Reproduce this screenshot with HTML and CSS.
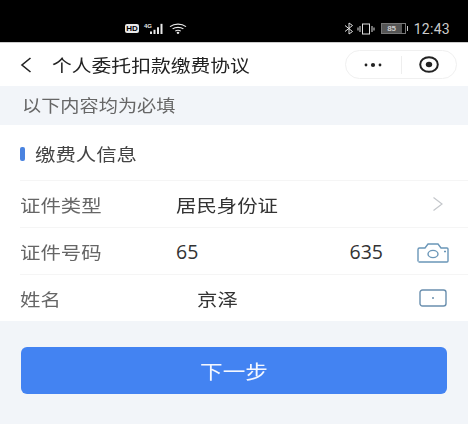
FILE: index.html
```html
<!DOCTYPE html>
<html lang="zh-CN">
<head>
    <meta charset="UTF-8">
    <title>个人委托扣款缴费协议</title>
    <link rel="stylesheet" href="styles.css">
</head>
<body>
    <div class="status-bar">
        <div class="status-left">
            <span class="hd-badge">HD</span>
            <span class="net-label">4G</span>
            <svg class="signal" width="16" height="11" viewBox="0 0 16 13" preserveAspectRatio="none">
                <rect x="0" y="10" width="2" height="3" fill="#e8e8e8"/>
                <rect x="3.5" y="8" width="2" height="5" fill="#e8e8e8"/>
                <rect x="7" y="5" width="2" height="8" fill="#e8e8e8"/>
                <rect x="10.5" y="1" width="2" height="12" fill="#e8e8e8"/>
            </svg>
            <svg class="wifi" width="18" height="11" viewBox="0 0 18 13" preserveAspectRatio="none" fill="none" stroke="#e8e8e8" stroke-width="1.3">
                <path d="M1 4.2C5.5 0.4 12.5 0.4 17 4.2"/>
                <path d="M3.6 7C6.6 4.6 11.4 4.6 14.4 7"/>
                <path d="M6.2 9.6C7.8 8.5 10.2 8.5 11.8 9.6"/>
                <circle cx="9" cy="11.6" r="0.7" fill="#e8e8e8"/>
            </svg>
        </div>
        <div class="status-right">
            <svg class="bt" width="10" height="13" viewBox="0 0 10 13" fill="none" stroke="#e0e0e0" stroke-width="1">
                <path d="M1 3.5L8.5 9.5L5 12V1L8.5 3.5L1 9.5"/>
            </svg>
            <svg class="vibrate" width="18" height="12" viewBox="0 0 18 12" fill="none" stroke="#e0e0e0" stroke-width="1">
                <rect x="5.5" y="1" width="7" height="10"/>
                <path d="M3 3V9M1 4.5V7.5M15 3V9M17 4.5V7.5"/>
            </svg>
            <span class="battery"><span class="battery-level">85</span></span>
            <span class="battery-tip"></span>
            <span class="clock">12:43</span>
        </div>
    </div>

    <div class="nav-bar">
        <svg class="back" width="12" height="16" viewBox="0 0 12 16" fill="none" stroke="#222" stroke-width="1.6">
            <path d="M10.5 1L2 8L10.5 15"/>
        </svg>
        <div class="nav-title wide-text">个人委托扣款缴费协议</div>
        <div class="capsule">
            <div class="capsule-part">
                <svg width="20" height="6" viewBox="0 0 20 6" fill="#222">
                    <circle cx="3" cy="3" r="1.4"/>
                    <circle cx="10" cy="3" r="2.1"/>
                    <circle cx="17" cy="3" r="1.4"/>
                </svg>
            </div>
            <div class="capsule-line"></div>
            <div class="capsule-part">
                <svg width="20" height="17" viewBox="0 0 20 17">
                    <ellipse cx="10" cy="8.5" rx="8.8" ry="7.3" fill="none" stroke="#222" stroke-width="2"/>
                    <ellipse cx="10" cy="8.5" rx="3.2" ry="2.7" fill="#222"/>
                </svg>
            </div>
        </div>
    </div>

    <div class="notice"><span class="wide-text">以下内容均为必填</span></div>

    <div class="form">
        <div class="section-title"><span class="marker"></span><span class="wide-text">缴费人信息</span></div>
        <div class="row">
            <div class="label wide-text">证件类型</div>
            <div class="value wide-text">居民身份证</div>
            <svg class="row-icon arrow" width="12" height="16" viewBox="0 0 12 16" fill="none" stroke="#c4c7cb" stroke-width="1.2">
                <path d="M1.5 1.5L10 8L1.5 14.5"/>
            </svg>
        </div>
        <div class="row">
            <div class="label wide-text">证件号码</div>
            <div class="value id-value"><span>65</span><span>635</span></div>
            <svg class="row-icon camera" width="32" height="20" viewBox="0 0 32 20" fill="none" stroke="#6a96b8" stroke-width="1.4">
                <path d="M1 18.5V6.5C1 5.5 1.5 5 2.5 5H8L11 1H21L24 5H30C30.6 5 31 5.4 31 6V18C31 18.6 30.6 19 30 19H1.5"/>
                <ellipse cx="16" cy="11" rx="5" ry="3.6"/>
                <path d="M27 8.5H29"/>
            </svg>
        </div>
        <div class="row last">
            <div class="label wide-text">姓名</div>
            <div class="value name-value wide-text">京泽</div>
            <svg class="row-icon name-icon" width="28" height="18" viewBox="0 0 28 18" fill="none" stroke="#6a8fae" stroke-width="1.4">
                <rect x="1" y="1" width="26" height="16" rx="2.5"/>
                <circle cx="14" cy="9" r="1" fill="#6a8fae" stroke="none"/>
            </svg>
        </div>
    </div>

    <div class="footer">
        <button class="next-btn"><span class="wide-text">下一步</span></button>
    </div>
</body>
</html>
```

FILE: styles.css
```css
html, body {
    height: 100%;
}

body {
    margin: 0;
    display: flex;
    flex-direction: column;
    background: #f2f5f9;
    font-family: "Noto Sans CJK SC", "Noto Sans", sans-serif;
    filter: blur(0.4px);
}

/* the shot is stretched sideways, so the text is a bit flat */
.wide-text {
    display: inline-block;
    transform: scaleY(0.86);
}

.status-bar {
    height: 42px;
    background: #000;
    color: #ddd;
    display: flex;
    align-items: center;
    padding-top: 15px;
    box-sizing: border-box;
}

.status-left {
    margin-left: 125px;
    display: flex;
    align-items: center;
}

.hd-badge {
    width: 14px;
    height: 9px;
    background: #e8e8e8;
    color: #000;
    border-radius: 2px;
    font: bold 8px/9px "Liberation Sans", sans-serif;
    text-align: center;
}

.net-label {
    margin-left: 5px;
    margin-top: -6px;
    font: bold 6px/8px "Liberation Sans", sans-serif;
    color: #e8e8e8;
}

.signal {
    margin-left: -2px;
}

.wifi {
    margin-left: 3px;
}

.status-right {
    margin-left: auto;
    margin-right: 18px;
    display: flex;
    align-items: center;
}

.vibrate {
    margin-left: 3px;
}

.battery {
    margin-left: 6px;
    width: 23px;
    height: 9px;
    border: 1px solid #777;
    display: flex;
}

.battery-level {
    width: 20px;
    background: #555;
    color: #ccc;
    font: bold 8px/9px "Liberation Sans", sans-serif;
    text-align: center;
}

.battery-tip {
    width: 1px;
    height: 5px;
    margin-left: 1px;
    background: #ccc;
}

.clock {
    margin-left: 6px;
    font: 14px/16px Roboto, sans-serif;
    letter-spacing: 0.3px;
    color: #ccc;
}

.nav-bar {
    height: 44px;
    background: #fff;
    display: flex;
    align-items: center;
    padding: 0 11px 0 20px;
    border-top: 1px solid #ccc;
    box-sizing: border-box;
}

.back {
    flex: none;
}

.nav-title {
    margin-left: 20px;
    font-size: 19.8px;
    color: #222;
}

.capsule {
    margin-left: auto;
    width: 110px;
    height: 27px;
    border: 1px solid #f0f0f0;
    border-radius: 15px;
    display: flex;
    align-items: center;
}

.capsule-part {
    flex: 1;
    display: flex;
    justify-content: center;
}

.capsule-line {
    width: 1px;
    height: 18px;
    background: #eee;
}

.notice {
    height: 39px;
    line-height: 39px;
    padding-left: 22px;
    font-size: 19.2px;
    color: #666;
}

.form {
    background: #fff;
    padding-left: 20px;
}

.section-title {
    height: 56px;
    display: flex;
    align-items: center;
    font-size: 20.4px;
    color: #444;
    box-sizing: border-box;
    border-bottom: 1px solid #f5f5f5;
}

.marker {
    width: 5px;
    height: 14px;
    margin: 3px 10px 0 0;
    border-radius: 2px;
    background: #4a83e0;
}

.row {
    height: 47px;
    display: flex;
    align-items: center;
    border-bottom: 1px solid #f5f5f5;
    box-sizing: border-box;
    position: relative;
    font-size: 20.4px;
}

.row.last {
    height: 46px;
    border-bottom: none;
}

.label {
    width: 156px;
    color: #666;
}

.value {
    color: #333;
}

.id-value {
    width: 207px;
    display: flex;
    justify-content: space-between;
    font-family: "Open Sans", sans-serif;
    font-size: 19.5px;
}

.name-value {
    margin-left: 21px;
}

.row-icon {
    position: absolute;
    right: 19px;
}

.arrow {
    right: 24px;
}

.camera {
    margin-top: 3px;
}

.name-icon {
    right: 21px;
}

.footer {
    padding: 26px 21px 0;
}

.next-btn {
    width: 100%;
    height: 47px;
    border: none;
    border-radius: 6px;
    background: #4383f2;
    color: #f4f7ff;
    font-family: "Noto Sans CJK SC", sans-serif;
    font-size: 22.6px;
}
```
